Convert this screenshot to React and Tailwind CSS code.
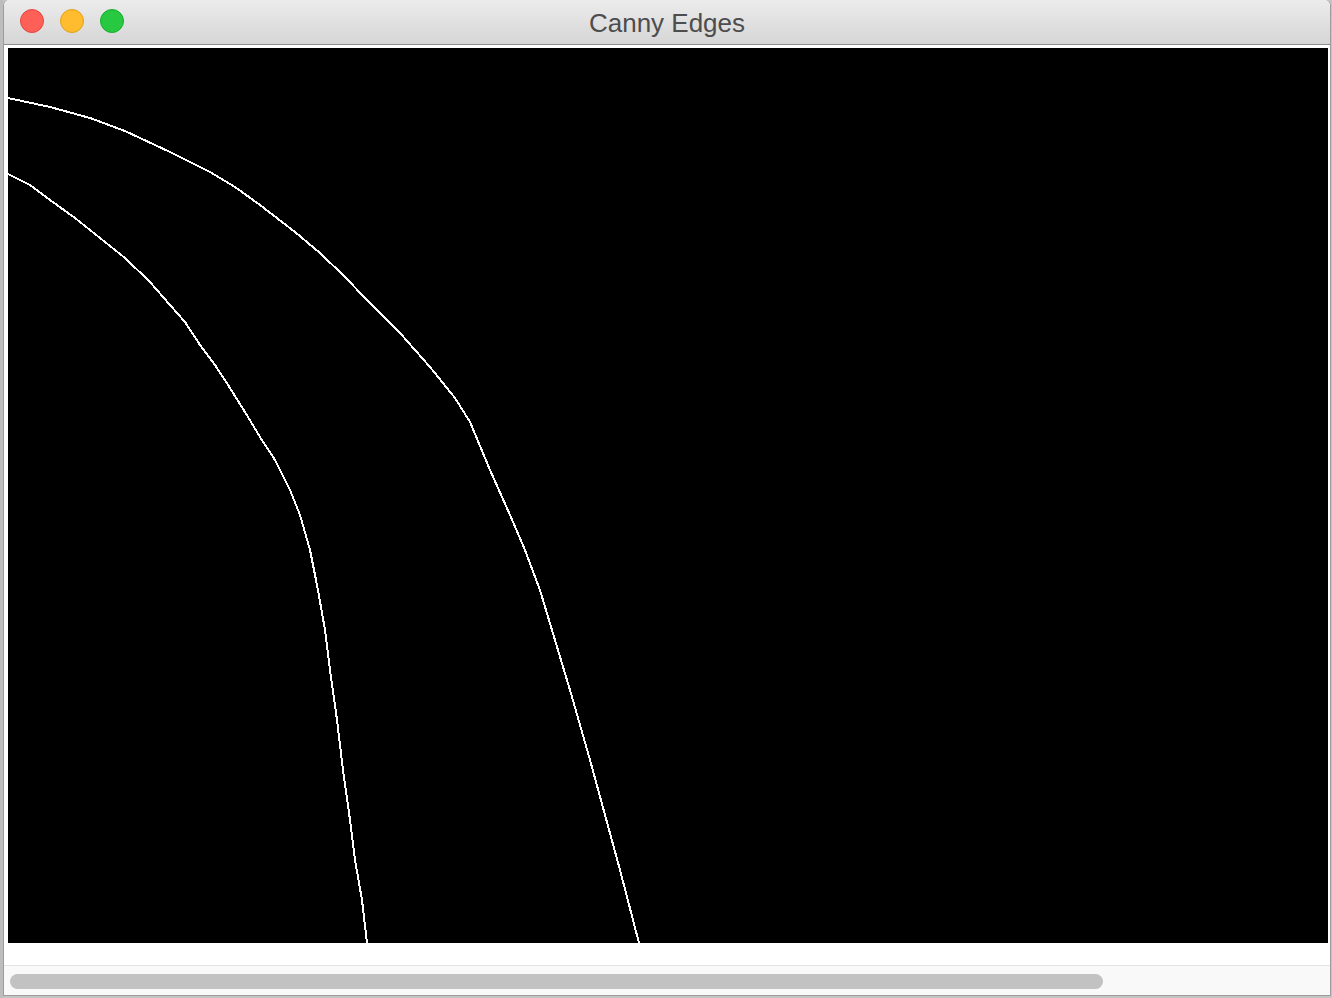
export default function App() {
  const outer = [
    [8, 98], [50, 107], [90, 118], [125, 131], [170, 152], [210, 172], [235, 187], [260, 205],
    [295, 232], [320, 253], [345, 277], [365, 298], [400, 333], [430, 367], [455, 398], [470, 422],
    [490, 470], [510, 515], [525, 550], [540, 590], [555, 640], [570, 690], [590, 760], [605, 815],
    [620, 870], [639, 943],
  ];
  const inner = [
    [8, 174], [30, 185], [50, 200], [75, 218], [100, 238], [125, 258], [150, 282], [170, 305],
    [185, 322], [200, 345], [215, 365], [230, 388], [245, 412], [260, 437], [275, 460], [290, 490],
    [300, 515], [310, 550], [318, 590], [325, 630], [330, 670], [337, 720], [343, 770], [350, 820],
    [355, 860], [362, 900], [367, 943],
  ];
  const pts = (a) => a.map((p) => p.join(",")).join(" ");
  return (
    <div className="w-[1332px] h-[998px] bg-[#c4c4c4] flex overflow-hidden" style={{ fontFamily: '"Liberation Sans", Arial, sans-serif' }}>
      <div className="w-[3px] shrink-0 bg-[#bdbdbd]" />
      <div className="w-[1328px] h-[996px] flex flex-col border-l border-r border-b border-[#9c9c9c] rounded-t-[6px] overflow-hidden bg-white">
        <div className="h-[45px] shrink-0 flex items-center relative bg-gradient-to-b from-[#ececec] to-[#d6d6d6] border-b border-[#8e8e8e]">
          <div className="flex gap-[16px] pl-[16px] pb-[2px]">
            <div className="w-[24px] h-[24px] rounded-full bg-[#fe5f57] border border-[#e2463f]" />
            <div className="w-[24px] h-[24px] rounded-full bg-[#febc2e] border border-[#e1a116]" />
            <div className="w-[24px] h-[24px] rounded-full bg-[#28c840] border border-[#14ae2c]" />
          </div>
          <div className="absolute inset-x-0 top-0 h-[44px] flex items-center justify-center text-[26px] text-[#4d4d4d] pointer-events-none pt-[2px]">
            Canny Edges
          </div>
        </div>
        <div className="h-[898px] shrink-0 flex flex-col pl-[4px] pr-[1px] pt-[3px]">
          <div className="h-[895px] w-[1320px] bg-black">
            <svg width="1320" height="895" viewBox="8 48 1320 895" className="block">
              <polyline points={pts(outer)} fill="none" stroke="white" strokeWidth="2" shapeRendering="crispEdges" />
              <polyline points={pts(inner)} fill="none" stroke="white" strokeWidth="2" shapeRendering="crispEdges" />
            </svg>
          </div>
        </div>
        <div className="h-[22px] shrink-0 bg-white" />
        <div className="flex-1 bg-[#f9f9f9] border-t border-[#e3e3e3] flex items-center pl-[6px] pt-[2px]">
          <div className="w-[1093px] h-[15px] rounded-full bg-[#c2c2c2]" />
        </div>
      </div>
    </div>
  );
}
